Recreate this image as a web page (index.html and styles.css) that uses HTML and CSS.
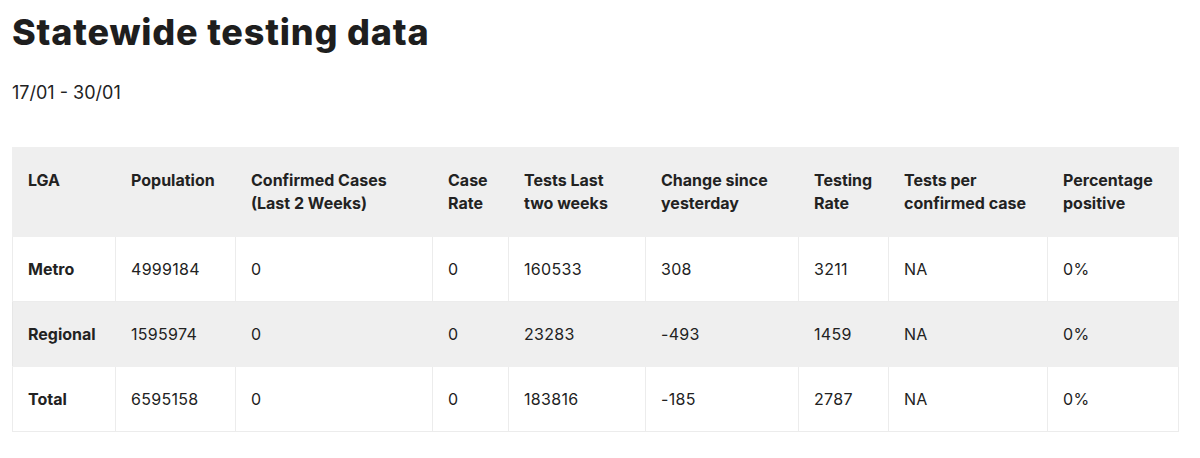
FILE: index.html
```html
<!DOCTYPE html>
<html lang="en">
<head>
<meta charset="utf-8">
<title>Statewide testing data</title>
<link rel="stylesheet" href="styles.css">
</head>
<body>
<main class="page">
  <h1 class="title">Statewide testing data</h1>
  <p class="range">17/01 - 30/01</p>
  <table class="data">
    <colgroup>
      <col class="c-lga"><col class="c-pop"><col class="c-conf"><col class="c-rate"><col class="c-tests"><col class="c-change"><col class="c-trate"><col class="c-per"><col class="c-pct">
    </colgroup>
    <thead>
      <tr>
        <th>LGA</th>
        <th>Population</th>
        <th>Confirmed Cases<br>(Last 2 Weeks)</th>
        <th>Case<br>Rate</th>
        <th>Tests Last<br>two weeks</th>
        <th>Change since<br>yesterday</th>
        <th>Testing<br>Rate</th>
        <th>Tests per<br>confirmed case</th>
        <th>Percentage<br>positive</th>
      </tr>
    </thead>
    <tbody>
      <tr>
        <th class="row-head">Metro</th>
        <td>4999184</td><td>0</td><td>0</td><td>160533</td><td>308</td><td>3211</td><td>NA</td><td>0%</td>
      </tr>
      <tr class="alt">
        <th class="row-head">Regional</th>
        <td>1595974</td><td>0</td><td>0</td><td>23283</td><td>-493</td><td>1459</td><td>NA</td><td>0%</td>
      </tr>
      <tr>
        <th class="row-head">Total</th>
        <td>6595158</td><td>0</td><td>0</td><td>183816</td><td>-185</td><td>2787</td><td>NA</td><td>0%</td>
      </tr>
    </tbody>
  </table>
</main>
</body>
</html>
```

FILE: styles.css
```css
html, body {
  margin: 0;
  padding: 0;
  background: #ffffff;
}
body {
  font-family: "Inter", "Liberation Sans", sans-serif;
  color: #222222;
}
.page {
  padding: 0 12px;
}
.title {
  margin: 0;
  padding-top: 10px;
  font-size: 36px;
  line-height: 44px;
  font-weight: 800;
  letter-spacing: 0.8px;
  color: #1e1e1e;
}
.range {
  margin: 27px 0 0;
  font-size: 18px;
  line-height: 24px;
  font-weight: 400;
  color: #222;
}
.data {
  margin-top: 42px;
  width: 1166px;
  border-collapse: collapse;
  table-layout: fixed;
  font-size: 16px;
}
.c-lga { width: 103px; }
.c-pop { width: 120px; }
.c-conf { width: 197px; }
.c-rate { width: 76px; }
.c-tests { width: 137px; }
.c-change { width: 153px; }
.c-trate { width: 90px; }
.c-per { width: 159px; }
.c-pct { width: 131px; }
.data thead th {
  background: #efefef;
  height: 89px;
  box-sizing: border-box;
  padding: 21px 15px 0;
  text-align: left;
  vertical-align: top;
  font-weight: 700;
  line-height: 23px;
  color: #222;
  border: 1px solid #efefef;
}
.data tbody th,
.data tbody td {
  height: 64px;
  padding: 0 15px;
  text-align: left;
  vertical-align: middle;
  line-height: 22px;
  border: 1px solid #ececec;
}
.data tbody th {
  font-weight: 700;
}
.data tbody td {
  font-weight: 400;
  letter-spacing: 0.3px;
}
.data tbody tr.alt th,
.data tbody tr.alt td {
  background: #efefef;
  border-color: #efefef;
  border-left-color: #e6e6e6;
}
```
